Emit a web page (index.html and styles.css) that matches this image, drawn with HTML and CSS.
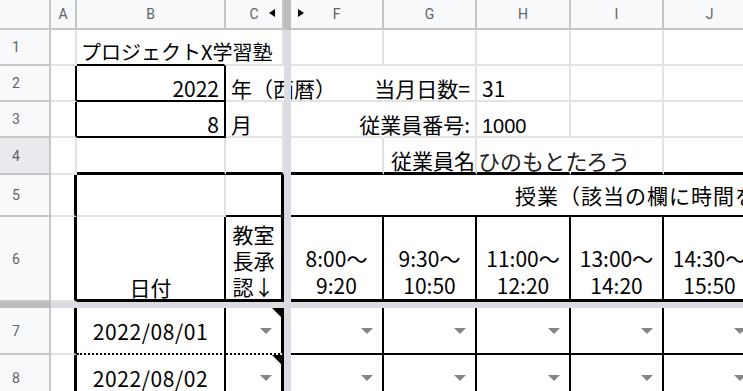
FILE: index.html
```html
<!DOCTYPE html>
<html lang="ja">
<head>
    <meta charset="UTF-8">
    <meta name="viewport" content="width=device-width, initial-scale=1.0">
    <title>勤務表</title>
    <link rel="stylesheet" href="styles.css">
</head>
<body>
    <div class="sheet">
        <!-- column headers -->
        <div class="hd"></div>
        <div class="hd">A</div>
        <div class="hd">B</div>
        <div class="hd hidden-after">C</div>
        <div class="hd freeze"></div>
        <div class="hd hidden-before">F</div>
        <div class="hd">G</div>
        <div class="hd">H</div>
        <div class="hd">I</div>
        <div class="hd">J</div>

        <!-- row 1 -->
        <div class="hd rh">1</div>
        <div class="cell"></div>
        <div class="cell b2 open title">プロジェクトX学習塾</div>
        <div class="cell"></div>
        <div class="freeze"></div>
        <div class="cell"></div>
        <div class="cell"></div>
        <div class="cell"></div>
        <div class="cell"></div>
        <div class="cell"></div>

        <!-- row 2 -->
        <div class="hd rh">2</div>
        <div class="cell r2"></div>
        <div class="cell right r2 b2">2022</div>
        <div class="cell open">年（西暦）</div>
        <div class="freeze"></div>
        <div class="cell open"></div>
        <div class="cell right">当月日数=</div>
        <div class="cell">31</div>
        <div class="cell"></div>
        <div class="cell"></div>

        <!-- row 3 -->
        <div class="hd rh">3</div>
        <div class="cell r2"></div>
        <div class="cell right r2 b2">8</div>
        <div class="cell">月</div>
        <div class="freeze"></div>
        <div class="cell open"></div>
        <div class="cell right">従業員番号:</div>
        <div class="cell num">1000</div>
        <div class="cell"></div>
        <div class="cell"></div>

        <!-- row 4 -->
        <div class="hd rh active">4</div>
        <div class="cell"></div>
        <div class="cell b3"></div>
        <div class="cell b3"></div>
        <div class="freeze"></div>
        <div class="cell b3"></div>
        <div class="cell right b3 flush-r">従業員名</div>
        <div class="cell b3 open flush-l name">ひのもとたろう</div>
        <div class="cell b3"></div>
        <div class="cell b3"></div>

        <!-- row 5 -->
        <div class="hd rh">5</div>
        <div class="cell r3"></div>
        <div class="cell"></div>
        <div class="cell r3 b2"></div>
        <div class="freeze"></div>
        <div class="cell middle b2 merged">授業（該当の欄に時間を入力）</div>

        <!-- row 6 -->
        <div class="hd rh">6</div>
        <div class="cell r3"></div>
        <div class="cell center r2 b3">日付</div>
        <div class="cell center r3 b3 wrap">教室長承認↓</div>
        <div class="freeze"></div>
        <div class="cell center r2 b3 slot">8:00～<br>9:20</div>
        <div class="cell center r2 b3 slot">9:30～<br>10:50</div>
        <div class="cell center r2 b3 slot">11:00～<br>12:20</div>
        <div class="cell center r2 b3 slot">13:00～<br>14:20</div>
        <div class="cell center r2 b3 slot">14:30～<br>15:50</div>

        <!-- frozen row line -->
        <div class="hd split"></div>
        <div class="freeze wide"></div>

        <!-- row 7 -->
        <div class="hd rh">7</div>
        <div class="cell r3"></div>
        <div class="cell center middle r2 dot date">2022/08/01</div>
        <div class="cell right middle r3 dot pick note"><span class="arrow"></span></div>
        <div class="freeze"></div>
        <div class="cell right middle r2 b2 pick"><span class="arrow"></span></div>
        <div class="cell right middle r2 b2 pick"><span class="arrow"></span></div>
        <div class="cell right middle r2 b2 pick"><span class="arrow"></span></div>
        <div class="cell right middle r2 b2 pick"><span class="arrow"></span></div>
        <div class="cell right middle r2 b2 pick"><span class="arrow"></span></div>

        <!-- row 8 -->
        <div class="hd rh">8</div>
        <div class="cell r3"></div>
        <div class="cell center middle r2 dot date">2022/08/02</div>
        <div class="cell right middle r3 dot pick note"><span class="arrow"></span></div>
        <div class="freeze"></div>
        <div class="cell right middle r2 b2 pick"><span class="arrow"></span></div>
        <div class="cell right middle r2 b2 pick"><span class="arrow"></span></div>
        <div class="cell right middle r2 b2 pick"><span class="arrow"></span></div>
        <div class="cell right middle r2 b2 pick"><span class="arrow"></span></div>
        <div class="cell right middle r2 b2 pick"><span class="arrow"></span></div>
    </div>
</body>
</html>
```

FILE: styles.css
```css
* {
    margin: 0;
    padding: 0;
    box-sizing: border-box;
}

html, body {
    overflow: hidden;
}

body {
    background: #fff;
    color: #000;
    font-family: "Noto Sans CJK JP", sans-serif;
}

.sheet {
    display: grid;
    grid-template-columns: 51px 26px 149px 58px 7px 93px 93px 94px 93px 93px;
    grid-template-rows: 30px 36px 36px 36px 37px 42px 85px 6px 47px 47px;
}

/* headers */
.hd {
    background: #f8f9fa;
    border-right: 2px solid #c4c7c5;
    border-bottom: 2px solid #c4c7c5;
    color: #5f6368;
    font: 14px Roboto, "Liberation Sans", sans-serif;
    display: flex;
    align-items: center;
    justify-content: center;
    position: relative;
}

.hd.rh {
    justify-content: flex-start;
    padding-left: 12px;
}

.hd.active {
    background: #e8eaed;
}

.hidden-after::after,
.hidden-before::after {
    content: '';
    position: absolute;
    top: 9px;
    border-top: 4px solid transparent;
    border-bottom: 4px solid transparent;
}

.hidden-after::after {
    right: 7px;
    border-right: 6px solid #000;
}

.hidden-before::after {
    left: 7px;
    border-left: 6px solid #000;
}

/* frozen pane lines */
.freeze {
    background: #dadce2;
    position: relative;
    z-index: 1;
}

.hd.freeze,
.hd.split {
    background: #bdbdbd;
    border: none;
}

.freeze.wide {
    grid-column: span 9;
}

/* cells */
.cell {
    border-right: 2px solid #e2e2e2;
    border-bottom: 2px solid #e2e2e2;
    display: flex;
    align-items: flex-end;
    padding: 0 5px;
    font-size: 21px;
    line-height: 24px;
    white-space: nowrap;
}

.right { justify-content: flex-end; }
.center { justify-content: center; text-align: center; }
.middle { align-items: center; }

.open { border-right-color: transparent; }

.r2 { border-right: 2px solid #000; }
.r3 { border-right: 3px solid #000; }
.b2 { border-bottom: 2px solid #000; }
.b3 { border-bottom: 3px solid #000; }
.dot { border-bottom: 2px dotted #000; }

.title {
    font-size: 20px;
    padding-left: 4px;
}

.num {
    font-family: "Liberation Sans", Arial, sans-serif;
    font-size: 20px;
    line-height: 20px;
}

.flush-r { padding-right: 0; }
.flush-l { padding-left: 1px; }

.name {
    font-size: 22px;
    color: #222;
}

.merged {
    grid-column: span 5;
    border-right: none;
    padding-left: 224px;
    letter-spacing: 1px;
}

.wrap {
    white-space: normal;
    line-height: 26px;
}

.slot {
    line-height: 27px;
}

.date {
    letter-spacing: 0.6px;
}

.pick {
    padding-right: 9px;
}

.arrow {
    width: 0;
    height: 0;
    border-left: 6px solid transparent;
    border-right: 6px solid transparent;
    border-top: 6px solid #858585;
}

.note {
    position: relative;
}

.note::before {
    content: '';
    position: absolute;
    top: 0;
    right: 0;
    border-top: 9px solid #000;
    border-left: 9px solid transparent;
}
```
